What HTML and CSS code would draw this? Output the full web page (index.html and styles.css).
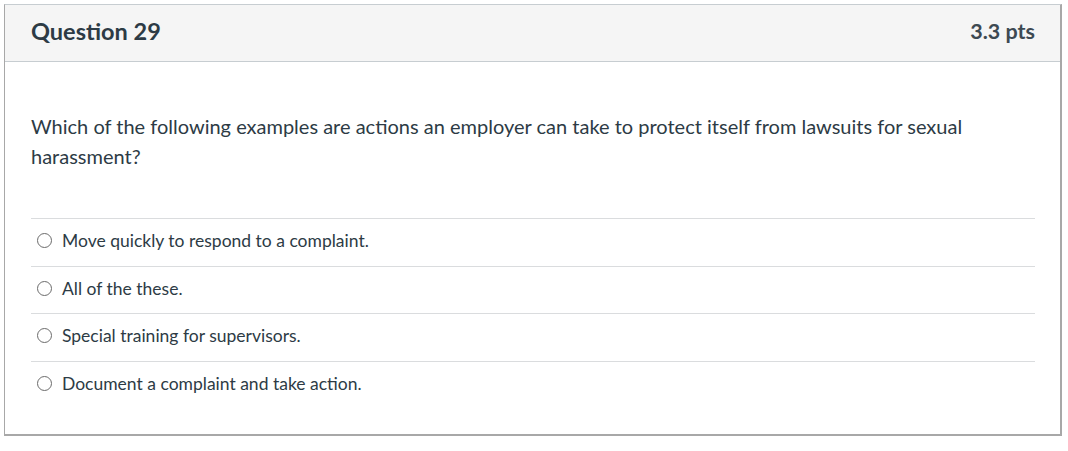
FILE: index.html
```html
<!DOCTYPE html>
<html>
<head>
<meta charset="utf-8">
<link rel="stylesheet" href="styles.css">
</head>
<body>
<div class="card">
  <div class="header">
    <span class="title">Question 29</span>
    <span class="points">3.3 pts</span>
  </div>
  <div class="body">
    <p class="question">Which of the following examples are actions an employer can take to protect itself from lawsuits for sexual harassment?</p>
    <div class="answers">
      <label class="answer"><span class="radio"></span><span class="label">Move quickly to respond to a complaint.</span></label>
      <label class="answer"><span class="radio"></span><span class="label">All of the these.</span></label>
      <label class="answer"><span class="radio"></span><span class="label">Special training for supervisors.</span></label>
      <label class="answer"><span class="radio"></span><span class="label">Document a complaint and take action.</span></label>
    </div>
  </div>
</div>
</body>
</html>
```
FILE: styles.css
```css
html, body {
  margin: 0;
  padding: 0;
  background: #ffffff;
}
body {
  font-family: Lato, "Noto Sans", sans-serif;
  color: #2d3b45;
}
.card {
  margin: 4px 0 0 4px;
  width: 1055px;
  height: 429px;
  border: 1px solid #a8a8a8;
  border-bottom-width: 2px;
  border-right-width: 2px;
  border-color: #c7cdd1 #a8a8a8 #a8a8a8 #a8a8a8;
  box-sizing: content-box;
}
.header {
  height: 57px;
  box-sizing: border-box;
  background: #f5f5f5;
  border-bottom: 1px solid #c7cdd1;
  display: flex;
  align-items: center;
  justify-content: space-between;
  padding: 0 25px 5px 26px;
}
.title {
  font-size: 23.5px;
  font-weight: 700;
  color: #2d3b45;
}
.points {
  font-size: 21.5px;
  font-weight: 700;
  color: #3d4952;
}
.body {
  padding: 49px 25px 0 26px;
}
.question {
  margin: 0;
  font-size: 20px;
  line-height: 30px;
  color: #2d3b45;
}
.answers {
  margin-top: 47px;
}
.answer {
  display: flex;
  align-items: center;
  gap: 10px;
  height: 42.7px;
  padding-bottom: 4px;
  border-top: 1px solid #dadcde;
  padding-left: 6px;
  box-sizing: content-box;
}
.radio {
  width: 13px;
  height: 13px;
  border: 1px solid #6b6b6b;
  border-radius: 50%;
  background: #fff;
  flex: none;
}
.label {
  font-size: 17.5px;
  color: #2d3b45;
}
```
